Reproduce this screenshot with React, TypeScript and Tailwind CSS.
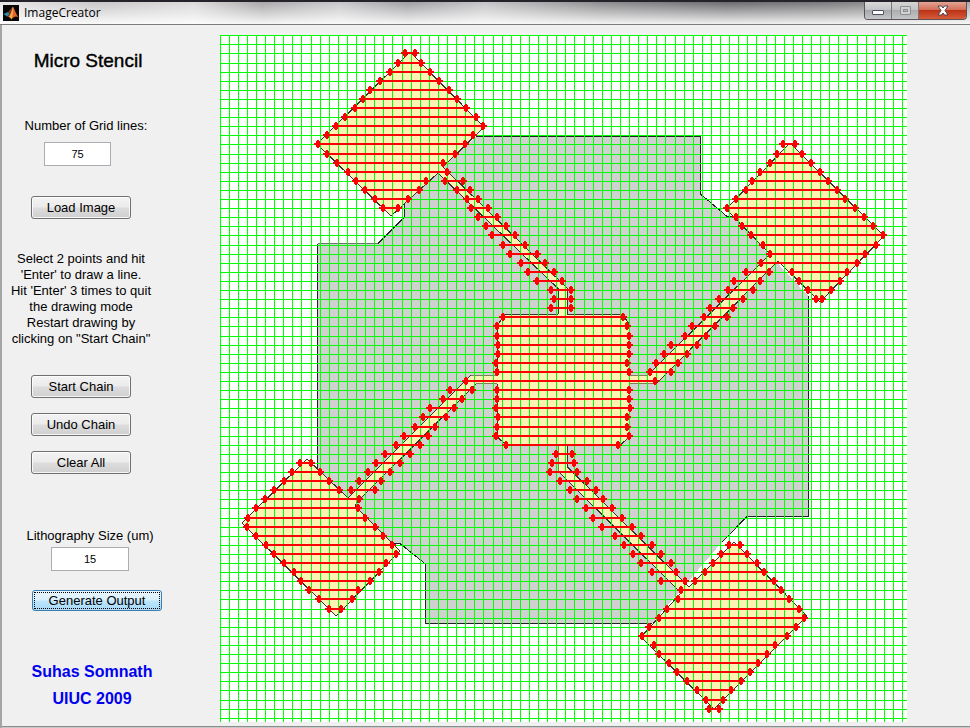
import React from "react";

/** Chains of the lithography pattern: [grid row, start x, end x] */
const SEGMENTS: [number, number, number][] = [
  // top left pad
  [2, 405, 415], [3, 398, 421], [4, 390, 430], [5, 380, 439], [6, 370, 449], [7, 363, 457],
  [8, 355, 466], [9, 345, 476], [10, 336, 483], [11, 327, 473], [12, 318, 465], [13, 327, 455],
  [14, 337, 443], [15, 348, 447], [16, 356, 426], [17, 365, 419], [18, 375, 408], [19, 383, 398],
  // top lead
  [16, 445, 463], [17, 457, 470], [18, 467, 478], [19, 471, 488], [20, 478, 497], [21, 486, 506],
  [22, 492, 515], [23, 503, 525], [24, 510, 537], [25, 521, 545], [26, 528, 554], [27, 537, 562],
  [28, 551, 571], [29, 554, 571], [30, 551, 571],
  // centre pad
  [31, 503, 623], [32, 497, 627], [33, 497, 629], [34, 498, 629], [35, 498, 629], [36, 496, 627],
  [37, 497, 629], [38, 466, 655], [39, 497, 629], [40, 497, 629], [41, 496, 630], [42, 498, 627],
  [43, 497, 627], [44, 496, 629], [45, 506, 618],
  // bottom lead
  [46, 556, 572], [47, 552, 574], [48, 550, 577], [49, 560, 587], [50, 570, 596], [51, 577, 603],
  [52, 586, 612], [53, 593, 622], [54, 602, 632], [55, 615, 641], [56, 624, 652], [57, 633, 661],
  [58, 641, 671], [59, 652, 676], [60, 661, 685],
  // bottom right pad
  [56, 729, 740], [57, 721, 747], [58, 713, 757], [59, 705, 764], [60, 695, 774], [61, 681, 781],
  [62, 678, 789], [63, 667, 799], [64, 659, 804], [65, 649, 796], [66, 642, 787], [67, 654, 775],
  [68, 659, 767], [69, 669, 758], [70, 677, 750], [71, 687, 741], [72, 697, 731], [73, 706, 723],
  [74, 709, 719],
  // right lead
  [26, 746, 769], [27, 734, 760], [28, 728, 753], [29, 719, 743], [30, 710, 733], [31, 704, 727],
  [32, 692, 715], [33, 685, 706], [34, 671, 697], [35, 664, 687], [36, 656, 678], [37, 650, 671],
  // top right pad
  [12, 783, 795], [13, 777, 802], [14, 770, 811], [15, 760, 820], [16, 752, 828], [17, 746, 837],
  [18, 736, 845], [19, 727, 855], [20, 736, 864], [21, 742, 873], [22, 751, 883], [23, 763, 876],
  [24, 770, 865], [25, 761, 857], [26, 792, 847], [27, 799, 840], [28, 808, 831], [29, 816, 822],
  // left lead
  [39, 450, 472], [40, 443, 462], [41, 430, 454], [42, 423, 446], [43, 415, 435], [44, 404, 428],
  [45, 396, 420], [46, 385, 410], [47, 376, 400], [48, 368, 390], [49, 359, 381], [50, 351, 375],
  // bottom left pad
  [47, 300, 311], [48, 292, 320], [49, 284, 329], [50, 274, 339], [51, 265, 359], [52, 256, 358],
  [53, 248, 365], [54, 247, 375], [55, 256, 383], [56, 266, 392], [57, 274, 396], [58, 284, 386],
  [59, 294, 379], [60, 301, 370], [61, 309, 358], [62, 319, 352], [63, 329, 341],
];

const COUNT = 75;
const gridX = (i: number) => Math.floor(220 + 9.1 * i);
const gridY = (i: number) => Math.floor(35.7 + 9.1 * i);
const LINES = Array.from({ length: COUNT + 1 }, (_, i) => i);

const marker = (x: number, y: number) =>
  `M${x - 1} ${y - 4}h2v1h1v2h2v2h-2v2h-1v1h-2v-1h-1v-2h-2v-2h2v-2h1z`;

function StencilPlot() {
  return (
    <svg viewBox="220 35 687 687" className="block h-auto w-full bg-white" shapeRendering="crispEdges" role="img" aria-label="Stencil drawing">
      <path
        d="M476 136.5H700.5V194L727 216.5H733L808.5 296V516.5H747L722 542L652 623.5H425.5V564L400 543.5H390L317.5 468V243.5H378L404.5 217V202Z"
        fill="#d0d0d0"
      />
      <path d="M722 542L734 542L722 556ZM404 202L396 212L404 217ZM390 543L400 543L397 552Z" fill="#ffffff" />
      <g fill="none" stroke="#222222">
        <path d="M476 136.5H700.5V194" />
        <path d="M700.5 194L727 216.5H733M808.5 296V516.5H747M747 516.5L722 542" />
        <path d="M652 623.5H425.5V564M425.5 564L400 543.5H392M317.5 468V243.5M378 243.5L404.5 217V202" />
        <path d="M317.5 243.5H378" stroke="#707070" />
      </g>
      <g fill="#fbf2b4">
        <path d="M410 52L484 127L443 167L567 288V314H623L629 325V375H648L770 254L726 209L790 143L884 236L820 302L778 261L656 384H629V437L619 446H567V467L689 587L734 542L807 616L714 709L641 637L681 593L558 471V446H507L497 437V384H476L361 498L355 506L400 551L336 616L242 523L307 459L348 498L471 375H497V325L505 314H558V289L438 173L391 216L317 144Z" />
      </g>
      <g fill="none" stroke="#333333">
        <path d="M558.5 314V289L438 173L391 216L317 144L410 52L484 127L443 167L567 288V314.5H623L629.5 325V375M505 314.5H558M505 314.5L497.5 325V375" />
        <path d="M648 375L770 254L726 209L790 143L884 236L820 302L778 261L656 384" />
        <path d="M629.5 384V437L619 446M567.5 446V467L689 587L734 542L807 616L714 709L641 637L681 593L558 471M507 446L497.5 437V384" />
        <path d="M476 384L361 498L355 506L400 551L336 616L242 523L307 459L348 498L471 375" />
        <path d="M471 375.5H497M476 383.5H497M629 375.5H648M629 383.5H656M558.5 446V471" stroke="#808060" />
      </g>
      <g stroke="#00ff00">
        {LINES.map((i) => (
          <line key={`v${i}`} x1={gridX(i) + 0.5} x2={gridX(i) + 0.5} y1={35} y2={722} />
        ))}
        {LINES.map((i) => (
          <line key={`h${i}`} x1={220} x2={907} y1={gridY(i) + 0.5} y2={gridY(i) + 0.5} />
        ))}
      </g>
      {SEGMENTS.map(([row, a, b]) => (
        <g key={`${row}-${a}`}>
          <line x1={a} x2={b} y1={gridY(row)} y2={gridY(row)} stroke="#ff0000" strokeWidth={2} />
          <path d={marker(a, gridY(row)) + marker(b, gridY(row))} fill="#ff0000" />
        </g>
      ))}
    </svg>
  );
}

function MatlabLogo() {
  return (
    <svg viewBox="0 0 16 16" className="size-4 shrink-0" aria-hidden="true">
      <rect width="16" height="16" fill="#050505" />
      <path d="M0.5 9L5 7L7 9L4 11.5Z" fill="#3b8ba5" />
      <path d="M5 7L10 1.5L8 9L5.5 12L4 11.5L7 9Z" fill="#7a3b22" />
      <path d="M10 1.5C11.5 4 13 9 15.5 12.5C13 11 11.5 11 8.5 14.5C7.5 12.5 7 12 5.5 12C8 10 9 5 10 1.5Z" fill="#e2652a" />
      <path d="M10 1.5C10.5 5 10 9 8.5 14.5C7.8 13 7 12 5.5 12C8 10 9 5 10 1.5Z" fill="#f5a94a" />
    </svg>
  );
}

function TitleBar() {
  return (
    <header className="flex h-[25px] items-start justify-between border-t-2 border-b border-t-[#26222a] border-b-[#7b7b7b] bg-[linear-gradient(to_right,#e8e6e6_0%,#c8c6c8_10%,#dcdada_20%,#a9a7a9_27%,#c8c8ca_35%,#9f9fa3_42%,#c4c4c6_50%,#8d8d8f_62%,#6c6c70_75%,#7a7a7c_85%,#aaa_100%)]">
      <div className="flex h-full flex-1 items-center gap-[5px] bg-linear-to-b from-white/0 to-white/90 pl-[3px]">
        <MatlabLogo />
        <h1 className="font-['Open_Sans',sans-serif] text-[12px] leading-4 text-black">ImageCreator</h1>
      </div>
      <div className="flex h-full bg-linear-to-b from-white/0 to-white/90 pr-[3px]">
        <div className="flex h-[18px] overflow-hidden rounded-b-[4px] border border-t-0 border-[#5b5358]">
          <button aria-label="Minimize" className="flex w-[27px] items-end justify-center border-r border-[#77777a] bg-[linear-gradient(#dadada_0%,#c4c5c7_45%,#a6a8ab_50%,#c4c6c8_100%)] pb-1">
            <span className="h-[5px] w-3 rounded-[1px] border border-[#4c4f63] bg-white" />
          </button>
          <button aria-label="Maximize" disabled className="flex w-[27px] items-center justify-center border-r border-[#77777a] bg-[linear-gradient(#d4d4d4_0%,#c2c3c4_45%,#acaeaf_50%,#c2c4c5_100%)]">
            <span className="flex h-[9px] w-[11px] items-center justify-center rounded-[1px] border border-[#8d8f92] bg-[#cfd0d1]">
              <span className="h-[3px] w-[5px] border border-[#8d8f92] bg-[#b5b7b9]" />
            </span>
          </button>
          <button aria-label="Close" className="flex w-[47px] items-center justify-center bg-[linear-gradient(#e3a493_0%,#d3705a_45%,#bb3317_50%,#d65b39_100%)]">
            <svg viewBox="0 0 12 11" className="h-[11px] w-3" aria-hidden="true">
              <path d="M1 1H4.5L6 3L7.5 1H11L8 5.5L11 10H7.5L6 8L4.5 10H1L4 5.5Z" fill="#ffffff" stroke="#54444c" />
            </svg>
          </button>
        </div>
      </div>
    </header>
  );
}

function PushButton({ children }: { children: React.ReactNode }) {
  return (
    <button className="ml-[29px] block h-[23px] w-[100px] rounded-[3px] border border-[#707070] bg-[linear-gradient(#f3f3f3_0%,#ebebeb_48%,#dddddd_52%,#cfcfcf_100%)] text-center text-[13px] leading-5 inset-ring inset-ring-white/80">
      {children}
    </button>
  );
}

const fieldClass = "block h-6 border border-[#abadb3] bg-white text-center text-[11px] text-black outline-none";

export default function App() {
  return (
    <div className="border-l-2 border-[#a5a5a5] bg-[#f0f0f0] font-['Liberation_Sans',Arial,sans-serif] text-black">
      <div className="-ml-0.5">
        <TitleBar />
      </div>
      <main className="flex items-start pr-[63px] pb-1">
        <aside className="w-[218px] shrink-0 pt-6">
          <h2 className="w-[172px] text-center text-[19px] leading-6 [-webkit-text-stroke:0.4px_black]">Micro Stencil</h2>

          <label htmlFor="grid-lines" className="mt-[45px] block w-[168px] text-center text-[13px] leading-4">
            Number of Grid lines:
          </label>
          <input id="grid-lines" defaultValue="75" className={`${fieldClass} mt-2 ml-[42px] w-[67px]`} />

          <div className="mt-[30px]">
            <PushButton>Load Image</PushButton>
          </div>

          <p className="mt-8 w-[158px] text-center text-[13px] leading-4">
            Select 2 points and hit
            <br />
            'Enter' to draw a line.
            <br />
            Hit 'Enter' 3 times to quit
            <br />
            the drawing mode
            <br />
            Restart drawing by
            <br />
            clicking on "Start Chain"
          </p>

          <div className="mt-7 flex flex-col gap-[15px]">
            <PushButton>Start Chain</PushButton>
            <PushButton>Undo Chain</PushButton>
            <PushButton>Clear All</PushButton>
          </div>

          <label htmlFor="litho-size" className="mt-[54px] block w-[176px] text-center text-[13px] leading-4">
            Lithography Size (um)
          </label>
          <input id="litho-size" defaultValue="15" className={`${fieldClass} mt-[3px] ml-[49px] w-[78px]`} />

          <button className="mt-[19px] ml-[30px] block h-[21px] w-[130px] rounded-[3px] border border-[#3c7fb1] bg-[linear-gradient(#eaf6fd_0%,#d9f0fc_48%,#bee6fd_52%,#a7d9f5_100%)] p-px text-[13px]">
            <span className="block h-[17px] border border-dotted border-black text-center leading-[15px]">Generate Output</span>
          </button>

          <p className="mt-[47px] w-[180px] text-center text-[16px] leading-[27px] font-bold text-[#0000ee]">
            Suhas Somnath
            <br />
            UIUC 2009
          </p>
        </aside>
        <div className="min-w-0 flex-1 pt-[10px]">
          <StencilPlot />
        </div>
      </main>
      <footer className="h-0.5 border-t border-[#8c8c8c] bg-[#c8c8c8]" />
    </div>
  );
}
